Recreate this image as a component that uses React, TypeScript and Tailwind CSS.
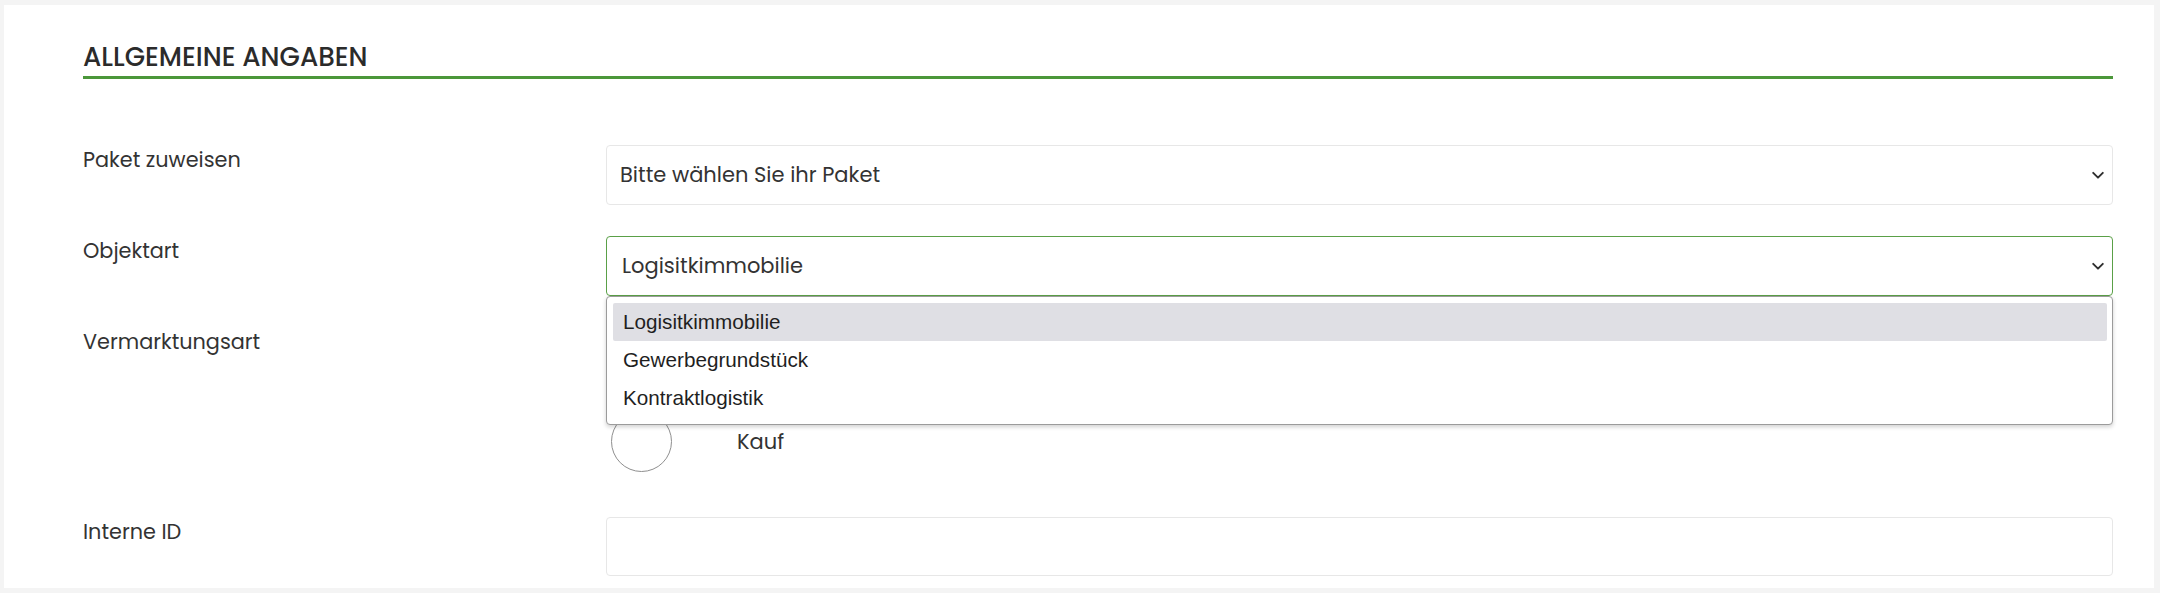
import React from "react";

const sans = "font-['Poppins','Open_Sans','Noto_Sans',sans-serif]";

function Chevron() {
  return (
    <svg width="14" height="14" viewBox="0 0 16 16" fill="none" className="shrink-0">
      <path d="M2.5 5.5 L8 11 L13.5 5.5" stroke="#2f2f2f" strokeWidth="2.2" strokeLinecap="round" strokeLinejoin="round" />
    </svg>
  );
}

function Radio({ label }: { label: string }) {
  return (
    <div className="flex h-[61px] items-center pl-[5px]">
      <div className="h-[61px] w-[61px] shrink-0 rounded-full border border-[#8f8f8f] bg-white" />
      <span className={`ml-[65px] text-[21px] text-[#333] ${sans}`}>{label}</span>
    </div>
  );
}

export default function App() {
  const options = ["Logisitkimmobilie", "Gewerbegrundstück", "Kontraktlogistik"];
  return (
    <div className="h-[593px] w-full bg-[#f4f4f4] pb-[5px] pl-[4px] pr-[6px] pt-[5px]">
      <div className={`h-full bg-white pl-[79px] pr-[41px] ${sans}`}>
        <div className="pt-[32px]">
          <h2 className="h-[39px] text-[26.3px] font-medium leading-[39px] text-[#2b2b2b]">
            ALLGEMEINE ANGABEN
          </h2>
          <div className="h-[3px] bg-[#4b973a]" />
        </div>

        <div className="mt-[66px] flex flex-col">
          <div className="flex">
            <div className="w-[523px] shrink-0 text-[20.8px] leading-[30px] text-[#333]">Paket zuweisen</div>
            <div className="flex h-[60px] flex-1 items-center justify-between rounded-[4px] border border-[#e7e7e7] pl-[13px] pr-[7px] text-[21px] text-[#333]">
              <span>Bitte wählen Sie ihr Paket</span>
              <Chevron />
            </div>
          </div>

          <div className="mt-[31px] flex">
            <div className="w-[523px] shrink-0 text-[20.8px] leading-[30px] text-[#333]">Objektart</div>
            <div className="relative flex-1">
              <div className="flex h-[60px] items-center justify-between rounded-[4px] border border-[#5aa047] pl-[15px] pr-[7px] text-[21px] text-[#333]">
                <span>Logisitkimmobilie</span>
                <Chevron />
              </div>
              <div className="absolute left-0 right-0 top-[60px] z-10 rounded-[4px] border border-[#9b9b9b] bg-white pb-[7px] pl-[6px] pr-[5px] pt-[6px] shadow-[0_2px_4px_rgba(0,0,0,0.18)]">
                {options.map((o, i) => (
                  <div
                    key={o}
                    className={`flex h-[38px] items-center rounded-[2px] pl-[10px] font-['Liberation_Sans',Arial,sans-serif] text-[20.7px] text-[#1f1f1f] ${
                      i === 0 ? "bg-[#dfdfe4]" : ""
                    }`}
                  >
                    {o}
                  </div>
                ))}
              </div>
            </div>
          </div>

          <div className="mt-[31px] flex">
            <div className="w-[523px] shrink-0 text-[20.8px] leading-[30px] text-[#333]">Vermarktungsart</div>
            <div className="flex flex-1 flex-col pt-[84px]">
              <Radio label="Kauf" />
            </div>
          </div>

          <div className="mt-[45px] flex">
            <div className="w-[523px] shrink-0 text-[20.8px] leading-[30px] text-[#333]">Interne ID</div>
            <div className="h-[59px] flex-1 rounded-[4px] border border-[#e7e7e7]" />
          </div>
        </div>
      </div>
    </div>
  );
}
